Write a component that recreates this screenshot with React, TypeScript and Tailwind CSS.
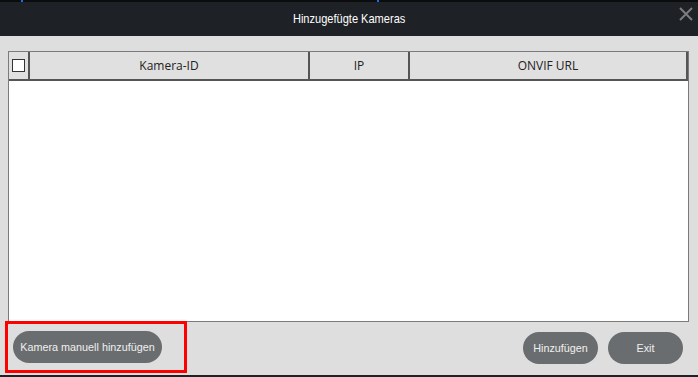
import type { FC } from 'react';

const PillButton: FC<{ label: string; className?: string }> = ({ label, className = '' }) => (
  <button
    type="button"
    className={`h-[32px] whitespace-nowrap rounded-full bg-[#6a6d6f] font-['Liberation_Sans',sans-serif] text-[10.8px] text-[#f0f0f0] ${className}`}
  >
    {label}
  </button>
);

export default function App() {
  return (
    <div className="flex h-[377px] w-[698px] flex-col overflow-hidden bg-[#dedede] font-['Open_Sans',sans-serif]">
      {/* window top edge */}
      <div className="relative h-[2px] bg-[#0b0c0d]">
        <div className="absolute left-[21px] top-0 h-[2px] w-[2px] bg-[#1d6fe0]" />
        <div className="absolute left-[377px] top-0 h-[2px] w-[2px] bg-[#1d6fe0]" />
      </div>

      {/* title bar */}
      <div className="relative flex h-[34px] items-center justify-center bg-[#1e2126]">
        <span className="inline-block scale-x-[0.85] font-['Liberation_Sans',sans-serif] text-[13px] text-white">
          Hinzugefügte Kameras
        </span>
        <svg
          className="absolute right-[5px] top-[5px]"
          width="14"
          height="14"
          viewBox="0 0 14 14"
          fill="none"
          stroke="#7a7c7f"
          strokeWidth="2"
        >
          <path d="M1 1 L13 13 M13 1 L1 13" />
        </svg>
      </div>

      {/* body */}
      <div className="flex flex-1 flex-col px-[8px] pt-[15px]">
        <div className="flex h-[271px] w-[681px] flex-col border border-[#7b7b7b] bg-white">
          <div className="flex h-[29px] border-b-2 border-[#555] bg-[#e0e0e0] text-[12px] text-[#222]">
            <div className="flex w-[21px] items-center justify-center border-r-2 border-[#555]">
              <div className="h-[13px] w-[13px] border border-[#333] bg-white" />
            </div>
            <div className="flex w-[280px] items-center justify-center border-r-2 border-[#555]">Kamera-ID</div>
            <div className="flex w-[100px] items-center justify-center border-r-2 border-[#555]">IP</div>
            <div className="flex flex-1 items-center justify-center border-r-2 border-[#555]">ONVIF URL</div>
          </div>
          <div className="flex-1" />
        </div>

        <div className="flex items-start">
          <div className="ml-[-3px] mt-[-1px] flex h-[52px] w-[182px] items-center border-[3px] border-[#ff0000] pl-[5px]">
            <PillButton label="Kamera manuell hinzufügen" className="w-[149px]" />
          </div>
          <div className="ml-auto mr-[7px] mt-[10px] flex gap-[10px]">
            <PillButton label="Hinzufügen" className="w-[75px]" />
            <PillButton label="Exit" className="w-[75px]" />
          </div>
        </div>
      </div>

      {/* window bottom edge */}
      <div className="h-[2px] bg-[#1e2126]" />
    </div>
  );
}
